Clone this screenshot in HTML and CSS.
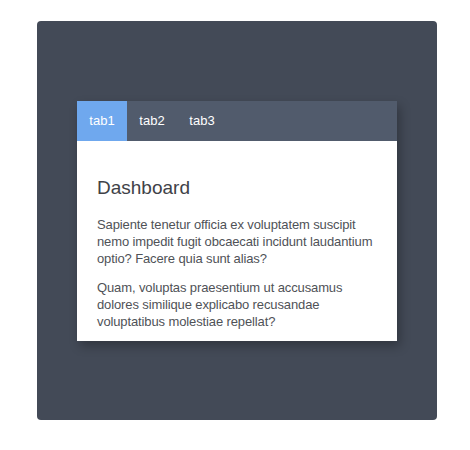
FILE: index.html
```html
<!DOCTYPE html>
<html lang="en">
<head>
<meta charset="utf-8">
<title>Tabs</title>
<link rel="stylesheet" href="styles.css">
</head>
<body>
<div class="stage">
  <div class="card">
    <nav class="tabs">
      <span class="tab active">tab1</span>
      <span class="tab">tab2</span>
      <span class="tab">tab3</span>
    </nav>
    <div class="content">
      <h2 class="title">Dashboard</h2>
      <p class="text">Sapiente tenetur officia ex voluptatem suscipit nemo impedit fugit obcaecati incidunt laudantium optio? Facere quia sunt alias?</p>
      <p class="text">Quam, voluptas praesentium ut accusamus dolores similique explicabo recusandae voluptatibus molestiae repellat?</p>
    </div>
  </div>
</div>
</body>
</html>
```
FILE: styles.css
```css
html, body {
  margin: 0;
  padding: 0;
  background: #ffffff;
}
body {
  padding: 21px 0 0 37px;
  font-family: "Liberation Sans", Arial, sans-serif;
}
.stage {
  width: 400px;
  height: 399px;
  background: #434a57;
  border-radius: 4px;
  display: flex;
  align-items: center;
  justify-content: center;
}
.card {
  width: 320px;
  background: #ffffff;
  box-shadow: 3px 5px 10px rgba(0, 0, 0, 0.28);
}
.tabs {
  display: flex;
  height: 40px;
  background: #515b6c;
}
.tab {
  width: 50px;
  display: flex;
  align-items: center;
  justify-content: center;
  color: #ffffff;
  font-size: 13px;
}
.tab.active {
  background: #6fa8ee;
}
.content {
  padding: 35px 20px 11px;
  color: #4f5257;
}
.title {
  margin: 0;
  font-size: 19px;
  line-height: 24px;
  font-weight: normal;
  color: #404247;
}
.text {
  margin: 16px 0 0;
  font-size: 13px;
  line-height: 17px;
  letter-spacing: -0.12px;
}
.text + .text {
  margin-top: 12px;
}
```
